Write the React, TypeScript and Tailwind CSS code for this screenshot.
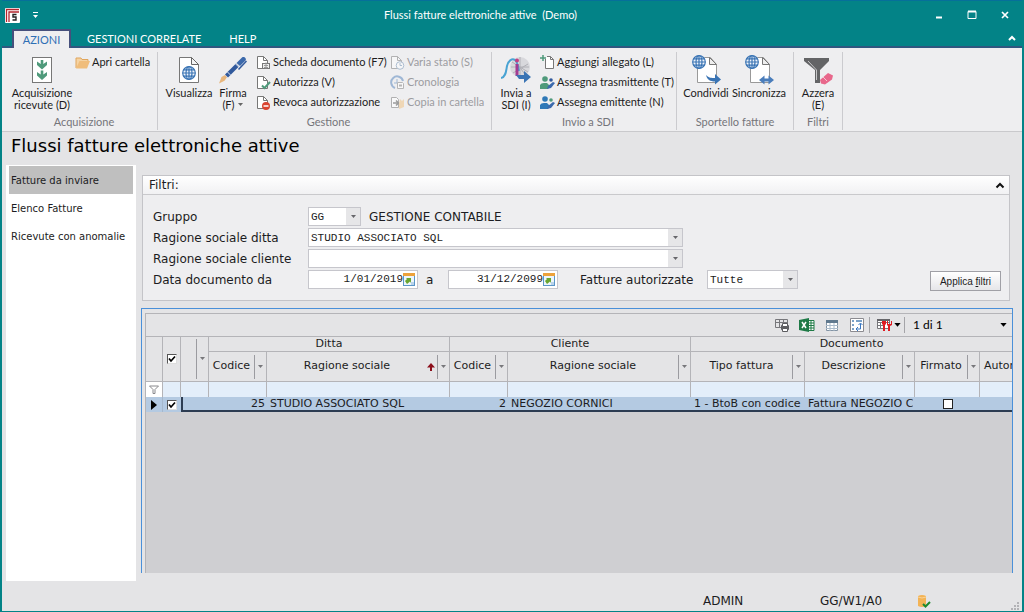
import type { ReactNode } from "react"
import clsx from "clsx"

const ribbonFont = "font-['Lato','Open_Sans',sans-serif]"
const formFont = "font-['DejaVu_Sans',sans-serif]"
const monoFont = "font-['Liberation_Mono',monospace]"

/* ---------- icons ---------- */

function Caret({ className, large }: { className?: string; large?: boolean }) {
  return (
    <svg viewBox="0 0 7 4" className={clsx("shrink-0 fill-current", large ? "h-[5px] w-[9px]" : "h-1 w-[7px]", className)}>
      <path d="M1 0h5L3.500 3z" />
    </svg>
  )
}

function Globe({ x, y, s = 1 }: { x: number; y: number; s?: number }) {
  return (
    <g transform={`translate(${x} ${y}) scale(${s})`} fill="#eef3fa" stroke="#3a74b4" strokeWidth="1.2">
      <circle cx="7" cy="7" r="6.3" />
      <ellipse cx="7" cy="7" rx="3" ry="6.3" />
      <path d="M7 .7v12.6M.7 7h12.6M1.500 3.800h11M1.500 10.200h11" fill="none" />
    </g>
  )
}

function AcquireIcon() {
  return (
    <svg viewBox="0 0 28 28" className="size-7">
      <rect x="4.500" y="1.500" width="19" height="25" fill="#fff" stroke="#777" />
      <g fill="#4f9a7b">
        <path d="M12.700 4h2.600v4L19 5.500V9l-5 4.500L9 9V5.500L12.700 8z" />
        <path d="M12.700 14.500h2.600v4L19 16v3.500L14 24l-5-4.500V16l3.700 2.500z" />
      </g>
    </svg>
  )
}

function ViewIcon() {
  return (
    <svg viewBox="0 0 28 28" className="size-7">
      <path d="M4.500 1.500h12l7 7v18h-19z" fill="#fff" stroke="#777" />
      <path d="M16.500 1.500v7h7z" fill="#f3f3f3" stroke="#666" />
      <Globe x={7} y={10} />
    </svg>
  )
}

function PenIcon() {
  return (
    <svg viewBox="0 0 28 28" className="size-7">
      <path d="M0 27.500l2.500-6.500 3.500-2 2 2.200-2.500 3.500z" fill="#e8b67c" />
      <path d="M6 18.500L17 7.500l3 3L9 21.500z" fill="#31599c" />
      <path d="M17.500 7L23 1.500c2-1.500 5 1 3.500 3L21 10z" fill="#3c69ab" />
      <path d="M27.500 5L19.500 13.500" stroke="#31599c" strokeWidth="1.500" />
      <path d="M8.500 16l3.300 3.300M16.500 7.800l3.300 3.300" stroke="#dce4f0" strokeWidth="1" />
    </svg>
  )
}

function SendIcon() {
  return (
    <svg viewBox="0 0 30 30" className="size-[30px]">
      <circle cx="19" cy="12" r="10" fill="#d8d8dc" />
      <path d="M11 7l16 10M12 18l15-9M19 2v20M10 12h18M13 4l12 17" stroke="#b0b0b6" strokeWidth="1" />
      <path d="M0 23c5-1 5-7 6-12S11 3 14 5s3 8 4 11" fill="none" stroke="#49a3d3" strokeWidth="2" />
      <path d="M16 9v12" stroke="#a33b92" strokeWidth="3" />
      <circle cx="16" cy="5.500" r="2" fill="#c43f83" />
      <path d="M15 20h8v-4l7 6-7 6v-4h-5z" fill="#3a74b4" />
    </svg>
  )
}

function ShareIcon({ sync }: { sync?: boolean }) {
  return (
    <svg viewBox="0 0 30 30" className="size-[30px]">
      <path d="M6.500 5.500v22h19v-18l-6-7h-6z" fill="#fff" stroke="#999" />
      <path d="M18.500 2.500v7h7z" fill="#eee" stroke="#777" />
      <Globe x={1} y={0} />
      {sync ? (
        <path d="M15 25l5.500-4.500v3h4v-3L30 25l-5.500 4.500v-3h-4v3z" fill="#4a7dbb" />
      ) : (
        <path d="M15 20c3 3 5 3 9 3v-4l6 5.500-6 5V26.500c-5 0-8-2-9-6.500z" fill="#3a74b4" />
      )}
    </svg>
  )
}

function ClearFilterIcon() {
  return (
    <svg viewBox="0 0 30 30" className="size-[30px]">
      <path d="M1 3h25v3l-9 9v13h-5V15L1 6z" fill="#636466" />
      <path d="M5 6l8.500 9v10" fill="none" stroke="#c7c7c9" />
      <path d="M17 25l8-7 5 2.500-1 4-7 5-4-1z" fill="#e8678b" />
      <path d="M20 22l4 4" stroke="#f7c3d1" />
    </svg>
  )
}

function PageShape() {
  return (
    <>
      <path d="M1.500 1.500h6l4 4v8h-10z" fill="#fff" stroke="#777" />
      <path d="M7.500 1.500v4h4" fill="none" stroke="#777" />
    </>
  )
}

const smallIcons: Record<string, ReactNode> = {
  folder: (
    <>
      <path d="M1 13V3h5l1 1.500h6V6" fill="#f5d3a3" stroke="#e0a55c" />
      <path d="M1 13.500L4.500 6H15l-3 7.500z" fill="#f0bd7b" />
    </>
  ),
  card: (
    <>
      <PageShape />
      <rect x="6.500" y="8.500" width="7" height="5" fill="#eee" stroke="#777" />
      <path d="M8 10.500h4M8 12.500h4M10 7.500v6" stroke="#999" />
    </>
  ),
  authorize: (
    <>
      <PageShape />
      <path d="M6 10.500l2.500 2.500 5.500-6" fill="none" stroke="#4f9a7b" strokeWidth="2" />
    </>
  ),
  revoke: (
    <>
      <PageShape />
      <circle cx="10" cy="11" r="4" fill="#d9432f" />
      <path d="M7.500 11h5" stroke="#fff" strokeWidth="1.500" />
    </>
  ),
  state: (
    <g opacity=".5">
      <PageShape />
      <circle cx="10" cy="10.500" r="3.800" fill="#fff" stroke="#6e8fb3" />
      <path d="M10 8v2.500h2" fill="none" stroke="#6e8fb3" />
    </g>
  ),
  history: (
    <g opacity=".55" fill="none">
      <path d="M5 13A6 6 0 1 1 13 6" stroke="#5f8bc0" strokeWidth="2" />
      <path d="M7 4v4H4" stroke="#5f8bc0" />
      <path d="M7.500 7.500h5l1 1v5h-6z" fill="#fff" stroke="#888" />
      <path d="M9 10.500h3" stroke="#888" strokeWidth="2" />
    </g>
  ),
  copy: (
    <g opacity=".6">
      <path d="M1.500 2.500h5l2 2v8h-7z" fill="#fff" stroke="#888" />
      <path d="M3 8h5M6 5.500L8.500 8 6 10.500" fill="none" stroke="#666" strokeWidth="1.500" />
      <path d="M10 4l2 2 2-2v8l-5 2V9z" fill="#f0c890" />
    </g>
  ),
  attach: (
    <>
      <path d="M5.500 4v9.500h8v-9l-3-3H7" fill="#fff" stroke="#777" />
      <path d="M10.500 1.500v3h3" fill="none" stroke="#777" />
      <path d="M0 3h6M3 0v6" stroke="#4f9a7b" strokeWidth="1.500" />
    </>
  ),
  transmitter: (
    <>
      <circle cx="5" cy="4" r="2.800" fill="#4f9a7b" />
      <path d="M0 14V10q1-2 4-2h3l3 3-2 3z" fill="#4f9a7b" />
      <circle cx="11" cy="5" r="1.800" fill="#31599c" />
      <path d="M7 14l1-3 5-4 2 1-4 5z" fill="#3a69ad" />
    </>
  ),
  issuer: (
    <>
      <circle cx="5" cy="4" r="2.800" fill="#2f78b7" />
      <path d="M0 14V10q1-2 4-2h3l3 3-2 3z" fill="#2f78b7" />
      <circle cx="11" cy="5" r="1.800" fill="#4f9a7b" />
      <path d="M7 14l1-3 5-4 2 1-4 5z" fill="#3a69ad" />
    </>
  ),
}

/* ---------- ribbon ---------- */

function SmallButton({ icon, children, disabled }: { icon: string; children: ReactNode; disabled?: boolean }) {
  return (
    <button type="button" disabled={disabled} className="flex h-5 items-center gap-0.5 whitespace-nowrap disabled:text-[#9c9ca0]">
      <svg viewBox="0 0 15 15" className="size-[15px] shrink-0">{smallIcons[icon]}</svg>
      {children}
    </button>
  )
}

function BigButton({ icon, className, children }: { icon: ReactNode; className: string; children: ReactNode }) {
  return (
    <button type="button" className={clsx("flex shrink-0 flex-col items-center self-start text-center leading-3 whitespace-nowrap", className)}>
      <span className="flex h-[35px] items-center">{icon}</span>
      <span>{children}</span>
    </button>
  )
}

function RibbonGroup({ label, className, children }: { label: string; className: string; children: ReactNode }) {
  return (
    <section className={clsx("flex shrink-0 flex-col border-r border-[#cbcbcf]", className)}>
      <div className="flex flex-1">{children}</div>
      <div className="text-center leading-4 text-[#75757a]">{label}</div>
    </section>
  )
}

function Ribbon() {
  return (
    <div className="border-b border-[#c9c9cc] bg-[#eeeef0] pt-1 pb-px pl-px">
      <div className="flex h-[78px]">
        <RibbonGroup label="Acquisizione" className="w-[155px] pl-2">
          <BigButton className="w-[62px]" icon={<AcquireIcon />}>Acquisizione<br />ricevute (D)</BigButton>
          <div className="pl-0.5">
            <SmallButton icon="folder">Apri cartella</SmallButton>
          </div>
        </RibbonGroup>
        <RibbonGroup label="Gestione" className="w-[334px] pl-2">
          <BigButton className="w-[46px]" icon={<ViewIcon />}>Visualizza</BigButton>
          <div className="pl-1">
            <BigButton className="w-[34px]" icon={<PenIcon />}>
              Firma<br />
              <span className="inline-flex items-center gap-0.5">(F) <Caret className="text-[#666]" /></span>
            </BigButton>
          </div>
          <div className="w-[140px] pl-1.5">
            <SmallButton icon="card">Scheda documento (F7)</SmallButton>
            <SmallButton icon="authorize">Autorizza (V)</SmallButton>
            <SmallButton icon="revoke">Revoca autorizzazione</SmallButton>
          </div>
          <div>
            <SmallButton icon="state" disabled>Varia stato (S)</SmallButton>
            <SmallButton icon="history" disabled>Cronologia</SmallButton>
            <SmallButton icon="copy" disabled>Copia in cartella</SmallButton>
          </div>
        </RibbonGroup>
        <RibbonGroup label="Invio a SDI" className="w-[185px] pl-2">
          <BigButton className="w-8" icon={<SendIcon />}>Invia a<br />SDI (I)</BigButton>
          <div className="pl-2">
            <SmallButton icon="attach">Aggiungi allegato (L)</SmallButton>
            <SmallButton icon="transmitter">Assegna trasmittente (T)</SmallButton>
            <SmallButton icon="issuer">Assegna emittente (N)</SmallButton>
          </div>
        </RibbonGroup>
        <RibbonGroup label="Sportello fatture" className="w-[117px]">
          <div className="flex flex-1 justify-center gap-0.5">
            <BigButton className="w-[46px]" icon={<ShareIcon />}>Condividi</BigButton>
            <BigButton className="w-14" icon={<ShareIcon sync />}>Sincronizza</BigButton>
          </div>
        </RibbonGroup>
        <RibbonGroup label="Filtri" className="w-[49px]">
          <div className="flex flex-1 justify-center">
            <BigButton className="w-[34px]" icon={<ClearFilterIcon />}>Azzera<br />(E)</BigButton>
          </div>
        </RibbonGroup>
      </div>
    </div>
  )
}

function TitleBar() {
  return (
    <header className="border-t border-[#06709a] bg-[#038387] text-white">
      <div className="flex h-7 items-center pr-px pl-[3px]">
        <div className="flex items-center gap-3">
          <svg viewBox="0 0 15 15" className="size-[15px]">
            <rect width="15" height="15" rx="1" fill="#fff" />
            <path d="M1.500 14V1.500H14M4 14V4h10" fill="none" stroke="#b3262e" strokeWidth="1.300" />
            <path d="M11.500 6.500H8v2.500h3v3H7.500" fill="none" stroke="#222" strokeWidth="1.400" />
          </svg>
          <svg viewBox="0 0 7 7" className="size-[7px] fill-white">
            <path d="M1 0h5v1H1zM1 3h5L3.500 6z" />
          </svg>
        </div>
        <h1 className="flex-1 text-center">Flussi fatture elettroniche attive&nbsp; (Demo)</h1>
        <div className="flex">
          <button type="button" aria-label="Riduci a icona" className="flex w-[33px] justify-center">
            <svg viewBox="0 0 10 10" className="size-2.5"><path d="M2 7.500h6" stroke="#fff" strokeWidth="2" /></svg>
          </button>
          <button type="button" aria-label="Ingrandisci" className="flex w-[33px] justify-center">
            <svg viewBox="0 0 10 10" className="size-2.5"><path d="M1 1.500h8v7H1z" fill="none" stroke="#fff" /><path d="M1 1.500h8" stroke="#fff" strokeWidth="2" /></svg>
          </button>
          <button type="button" aria-label="Chiudi" className="flex w-[33px] justify-center">
            <svg viewBox="0 0 10 10" className="size-2.5"><path d="M2 2l6 6M8 2l-6 6" stroke="#fff" strokeWidth="1.700" /></svg>
          </button>
        </div>
      </div>
      <nav className="flex h-[19px] items-stretch border-b-2 border-[#2f5780] pl-2.5">
        <button type="button" className="-mb-0.5 w-[59px] border-2 border-b-0 border-[#46507c] bg-[#eeeef0] leading-4 text-[#2f6fb5]">AZIONI</button>
        <button type="button" className="px-4 leading-5">GESTIONI CORRELATE</button>
        <button type="button" className="px-3 leading-5">HELP</button>
        <button type="button" aria-label="Comprimi barra" className="mr-1.5 ml-auto">
          <svg viewBox="0 0 8 6" className="h-1.5 w-2"><path d="M1 5l3-3 3 3" fill="none" stroke="#fff" strokeWidth="2" /></svg>
        </button>
      </nav>
    </header>
  )
}

/* ---------- filters ---------- */

function SelectBox({ id, options, className }: { id: string; options: string[]; className: string }) {
  return (
    <div className={clsx("relative h-[19px] border border-[#c6c6cc] bg-white", className)}>
      <select id={id} className={clsx("block h-full w-full appearance-none bg-transparent pl-0.5 text-[11px] leading-4 outline-none", monoFont)}>
        {options.map((o) => (
          <option key={o}>{o}</option>
        ))}
      </select>
      <span className="pointer-events-none absolute inset-y-0 right-0 flex w-3.5 items-center justify-center bg-[#e6e6e8] text-[#66666a]">
        <Caret />
      </span>
    </div>
  )
}

function DateBox({ id, value }: { id: string; value: string }) {
  return (
    <div className="flex h-[19px] w-[110px] items-center border border-[#c6c6cc] bg-white pr-0.5">
      <input id={id} defaultValue={value} className={clsx("w-full min-w-0 text-right text-[11px] outline-none", monoFont)} />
      <button type="button" aria-label="Apri calendario" className="shrink-0">
        <svg viewBox="0 0 12 13" className="h-[13px] w-3">
          <rect x=".5" y=".5" width="11" height="12" fill="#eef5fb" stroke="#5b96c8" />
          <path d="M0 0h12v3H0z" fill="#eda23b" />
          <path d="M2 8l2-2-1-1h5v5L7 8.500 4 11z" fill="#6aa52f" />
          <path d="M8 9h3v3H8z" fill="#b9d3ea" />
        </svg>
      </button>
    </div>
  )
}

function Filters() {
  return (
    <section className="mr-[3px] ml-px border border-[#c4c4c8] bg-[#eeeef0]">
      <div className="flex h-[19px] items-center justify-between border-b border-[#c9c9cc] bg-linear-to-b from-white to-[#f1f1f3] pr-1 pl-1.5">
        <h3>Filtri:</h3>
        <button type="button" aria-label="Comprimi filtri">
          <svg viewBox="0 0 10 7" className="h-[7px] w-2.5"><path d="M1.500 5.500L5 2l3.500 3.500" fill="none" stroke="#111" strokeWidth="2" /></svg>
        </button>
      </div>
      <div className="flex items-end pt-3 pr-2 pb-[11px] pl-2.5">
        <div className="grid flex-1 grid-cols-[155px_1fr] items-center gap-y-0.5">
          <label htmlFor="gruppo">Gruppo</label>
          <div className="flex items-center gap-2">
            <SelectBox id="gruppo" options={["GG"]} className="w-[53px]" />
            <span>GESTIONE CONTABILE</span>
          </div>
          <label htmlFor="ditta">Ragione sociale ditta</label>
          <SelectBox id="ditta" options={["STUDIO ASSOCIATO SQL"]} className="w-[375px]" />
          <label htmlFor="cliente">Ragione sociale cliente</label>
          <SelectBox id="cliente" options={[""]} className="w-[375px]" />
          <label htmlFor="da">Data documento da</label>
          <div className="flex items-center">
            <DateBox id="da" value="1/01/2019" />
            <label htmlFor="al" className="w-[30px] pl-2">a</label>
            <DateBox id="al" value="31/12/2099" />
            <label htmlFor="autorizzate" className="w-[149px] pl-[22px] whitespace-nowrap">Fatture autorizzate</label>
            <SelectBox id="autorizzate" options={["Tutte"]} className="w-[91px]" />
          </div>
        </div>
        <button type="button" className="-mb-0.5 h-5 w-[71px] shrink-0 border border-[#a0a0a6] bg-linear-to-b from-white to-[#e6e6e9] font-['Liberation_Sans',sans-serif] text-[10px]">
          Applica <u>f</u>iltri
        </button>
      </div>
    </section>
  )
}

/* ---------- grid ---------- */

function CheckBox({ label, checked }: { label: string; checked?: boolean }) {
  return (
    <span className="inline-grid place-items-center align-middle">
      <input
        type="checkbox"
        aria-label={label}
        defaultChecked={checked}
        className={clsx("peer col-start-1 row-start-1 size-2.5 appearance-none border bg-white", checked ? "border-t-[#555] border-r-[#ddd] border-b-[#ddd] border-l-[#555]" : "border-[#222]")}
      />
      <svg viewBox="0 0 8 8" className="pointer-events-none invisible col-start-1 row-start-1 size-2 peer-checked:visible">
        <path d="M1 3.500l2 2.500 4-4.500" fill="none" stroke="#000" strokeWidth="1.700" />
      </svg>
    </span>
  )
}

const th = "border-r border-b border-[#b4b4b8] p-0 font-normal"
const td = "overflow-hidden border-b-2 border-b-[#2c3c52] p-0 leading-3 whitespace-nowrap"

function HeadCell({ children, sorted }: { children?: ReactNode; sorted?: boolean }) {
  return (
    <div className="flex h-[29px] items-center overflow-hidden">
      <span className="flex-1 text-center whitespace-nowrap">{children}</span>
      {sorted && (
        <svg viewBox="0 0 8 8" className="mr-0.5 size-2"><path d="M4 0l4 4.500H5V8H3V4.500H0z" fill="#8c0f1b" /></svg>
      )}
      <span className="flex h-6 w-3 shrink-0 items-center justify-center border-l border-[#9b9ba0]">
        <Caret className="text-[#77777b]" />
      </span>
    </div>
  )
}

function GridToolbar() {
  const button = "flex w-[25px] justify-center"
  return (
    <div className="flex h-[23px] items-center border-b border-[#b4b4b8] pr-1 text-black">
      <div className="ml-auto flex items-center">
        <button type="button" aria-label="Stampa" className={button}>
          <svg viewBox="0 0 16 16" className="size-4">
            <path d="M1.500 2.500h12v8h-12zM1.500 5.500h12M5.500 2v9M9.500 2v7" fill="none" stroke="#77777b" />
            <rect x="7" y="8" width="8" height="5" rx="1" fill="#5c5c60" />
            <path d="M8.500 6.500h5v3h-5zM8.500 11.500h5v3h-5z" fill="#fff" stroke="#5c5c60" />
          </svg>
        </button>
        <button type="button" aria-label="Esporta in Excel" className={button}>
          <svg viewBox="0 0 16 16" className="size-4">
            <path d="M9 3.500h6v10H9z" fill="#fff" stroke="#1f7a47" />
            <path d="M9 6h6M9 8.500h6M9 11h6M12 3v10" stroke="#1f7a47" />
            <path d="M0 3l10-2v14L0 13z" fill="#1f7a47" />
            <path d="M3 5l4 6M7 5l-4 6" stroke="#fff" strokeWidth="1.500" />
          </svg>
        </button>
        <button type="button" aria-label="Tabella" className={button}>
          <svg viewBox="0 0 14 14" className="size-3.5">
            <path d="M1.500 2.500h11v10h-11z" fill="#fff" stroke="#8293a3" />
            <path d="M1 2h12v3H1z" fill="#60798f" />
            <path d="M1 7.500h12M1 10.500h12M5 5v8M9 5v8" stroke="#a9bacb" />
          </svg>
        </button>
        <button type="button" aria-label="Pivot" className={button}>
          <svg viewBox="0 0 16 16" className="size-4">
            <path d="M1.500 1.500h13v13h-13z" fill="#fff" stroke="#8b8b90" />
            <path d="M3 4h2M7 4h6M4 7v2M4 11v2" stroke="#4f82b6" strokeWidth="1.500" />
            <path d="M7 12h4.500V6.500M9.500 8l2-2 2 2M9 10l-2 2 2 2" fill="none" stroke="#3977c2" />
          </svg>
        </button>
        <span className="mr-1.5 h-4 border-l border-[#a4a4a8]" />
        <button type="button" aria-label="Strumenti" className="flex items-center gap-px">
          <svg viewBox="0 0 16 16" className="size-4">
            <path d="M1.500 2.500h12v9h-12zM1.500 5.500h12M1.500 8.500h6M4.500 5v6" fill="#fff" stroke="#77777b" />
            <path d="M1 2h13v2H1z" fill="#66666a" />
            <path d="M6 4v3l1 1v6h2V8l1-1V4z" fill="#e01b22" />
            <path d="M11 4v4l1 1v5h2V9l2-1V4h-1v3h-3V4z" fill="#e01b22" />
          </svg>
          <Caret large />
        </button>
        <span className="mr-2 ml-0.5 h-4 border-l border-[#a4a4a8]" />
        <span className={clsx("w-[86px] text-[12px]", ribbonFont)}>1 di 1</span>
        <button type="button" aria-label="Record"><Caret large /></button>
      </div>
    </div>
  )
}

function InvoiceGrid() {
  return (
    <section className="flex-1 border-x border-t border-[#4a90d9] bg-[#e4e4e6] pt-1 pl-[3px]">
      <div className="flex h-full flex-col border-t border-l border-[#b4b4b8] bg-[#cfcfd2]">
        <div className="bg-[#e4e4e6]">
          <GridToolbar />
        </div>
        <div className="overflow-hidden">
          <table className="w-full table-fixed border-separate border-spacing-0 text-[11px]">
            <colgroup>
              <col className="w-[17px]" />
              <col className="w-[18px]" />
              <col className="w-7" />
              <col className="w-[58px]" />
              <col className="w-[183px]" />
              <col className="w-[58px]" />
              <col className="w-[183px]" />
              <col className="w-[114px]" />
              <col className="w-[110px]" />
              <col className="w-[65px]" />
              <col />
            </colgroup>
            <thead className="bg-[#e4e4e6]">
              <tr className="h-[15px] leading-[14px]">
                <th rowSpan={2} className={th} />
                <th rowSpan={2} className={th}><CheckBox label="Seleziona tutto" checked /></th>
                <th rowSpan={2} className={th}>
                  <div className="flex h-10 justify-end">
                    <span className="flex w-3 items-center justify-center border-l border-[#9b9ba0]"><Caret className="text-[#77777b]" /></span>
                  </div>
                </th>
                <th colSpan={2} className={th}>Ditta</th>
                <th colSpan={2} className={th}>Cliente</th>
                <th colSpan={4} className={clsx(th, "border-r-0")}>Documento</th>
              </tr>
              <tr>
                <th className={th}><HeadCell>Codice</HeadCell></th>
                <th className={th}><HeadCell sorted>Ragione sociale</HeadCell></th>
                <th className={th}><HeadCell>Codice</HeadCell></th>
                <th className={th}><HeadCell>Ragione sociale</HeadCell></th>
                <th className={th}><HeadCell>Tipo fattura</HeadCell></th>
                <th className={th}><HeadCell>Descrizione</HeadCell></th>
                <th className={th}><HeadCell>Firmato</HeadCell></th>
                <th className={clsx(th, "overflow-hidden border-r-0 pl-1 text-left")}>Autorizzato</th>
              </tr>
            </thead>
            <tbody>
              <tr className="h-[15px] bg-[#e3eefa]">
                <td className="border-r border-[#b4b4b8] bg-white p-0">
                  <svg viewBox="0 0 10 9" className="mx-auto h-[9px] w-2.5"><path d="M.5 1h9L6 4.500v4H4v-4z" fill="#fff" stroke="#88888c" /></svg>
                </td>
                {Array.from({ length: 9 }, (_, i) => (
                  <td key={i} className="border-r border-[#b4b4b8] p-0" />
                ))}
                <td className="p-0" />
              </tr>
              <tr className="h-[15px] bg-[#b4cae2]">
                <td className="border-r border-[#a6b8cc] p-0">
                  <svg viewBox="0 0 6 10" className="mx-auto h-2.5 w-1.5"><path d="M0 0l6 5-6 5z" /></svg>
                </td>
                <td className="p-0 text-center leading-3"><CheckBox label="Seleziona riga" checked /></td>
                <td className={clsx(td, "border-l-2 border-l-[#2c3c52]")} />
                <td className={clsx(td, "pr-0.5 text-right")}>25</td>
                <td className={clsx(td, "pl-[3px]")}>STUDIO ASSOCIATO SQL</td>
                <td className={clsx(td, "pr-0.5 text-right")}>2</td>
                <td className={clsx(td, "pl-[3px]")}>NEGOZIO CORNICI</td>
                <td className={clsx(td, "pl-[3px]")}><div className="mr-0.5 overflow-hidden">1 - BtoB con codice destinatario</div></td>
                <td className={clsx(td, "pl-[3px]")}><div className="mr-0.5 overflow-hidden">Fattura NEGOZIO CORNICI</div></td>
                <td className={clsx(td, "text-center")}><CheckBox label="Firmato" /></td>
                <td className={td} />
              </tr>
            </tbody>
          </table>
        </div>
      </div>
    </section>
  )
}

/* ---------- page ---------- */

function StatusBar() {
  return (
    <footer className="flex h-[30px] items-center justify-end pt-2.5">
      <span className="w-[117px]">ADMIN</span>
      <span className="w-[97px]">GG/W1/A0</span>
      <svg viewBox="0 0 14 14" className="mr-20 size-3.5">
        <path d="M1 2q4-2 8 0v10q-4 2-8 0z" fill="#f3b355" />
        <path d="M1 3q4 2 8 0" fill="none" stroke="#f8d49b" />
        <path d="M6 10l2.500 2.500L13 8" fill="none" stroke="#1c8a2e" strokeWidth="2" />
      </svg>
      <svg viewBox="0 0 9 9" className="mr-0.5 size-[9px] self-end fill-[#b2b2b6]">
        <path d="M6 0h2v2H6zM3 3h2v2H3zM6 3h2v2H6zM0 6h2v2H0zM3 6h2v2H3zM6 6h2v2H6z" />
      </svg>
    </footer>
  )
}

const views = ["Fatture da inviare", "Elenco Fatture", "Ricevute con anomalie"]

export default function App() {
  return (
    <div className="flex min-h-screen flex-col border-x-2 border-b border-[#038387] bg-[#e4e4e6] text-[#1c1c22]">
      <div className={clsx("text-[11px]", ribbonFont)}>
        <TitleBar />
        <Ribbon />
      </div>
      <div className={clsx("flex flex-1 flex-col text-[12px]", formFont)}>
        <h2 className="h-[33px] pl-[9px] text-[18px] leading-7 text-black">Flussi fatture elettroniche attive</h2>
        <div className="flex flex-1 gap-[5px] pl-1">
          <nav className="w-[130px] shrink-0 bg-white px-[3px] pt-px text-[10px]">
            {views.map((view, i) => (
              <button key={view} type="button" className={clsx("block h-7 w-full pl-0.5 text-left whitespace-nowrap", i === 0 && "bg-[#bfbfbf]")}>
                {view}
              </button>
            ))}
          </nav>
          <main className="flex min-w-0 flex-1 flex-col gap-[7px] pt-2.5 pr-[9px] pb-2">
            <Filters />
            <InvoiceGrid />
          </main>
        </div>
        <StatusBar />
      </div>
    </div>
  )
}
